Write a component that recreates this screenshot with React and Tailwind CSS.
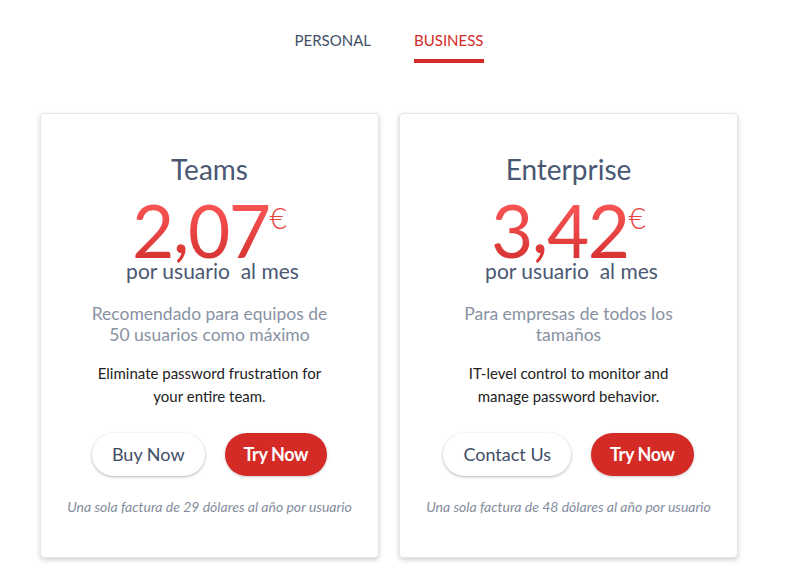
import React from "react";

const font = { fontFamily: "Lato, 'Open Sans', sans-serif" };

function Card({ title, whole, cents, desc, body, secondary, footer }) {
  return (
    <div className="w-[339px] h-[445px] bg-white rounded-[4px] border border-[#e6e6e6] shadow-[0_2px_5px_rgba(0,0,0,0.18)] flex flex-col items-center pt-[38px]">
      <div className="text-[28px] leading-[34px] text-[#4a5873]">{title}</div>
      <div className="flex items-start mt-[8px]">
        <span className="text-[73px] leading-[72px] tracking-[-1.5px] bg-gradient-to-b from-[#ff5a5a] to-[#d32f2f] bg-clip-text text-transparent">
          {whole}
          <span className="leading-[40px] align-[5px]">,</span>
          {cents}
        </span>
        <span className="text-[30px] leading-[30px] mt-[8px] font-light text-[#e8443f]">€</span>
      </div>
      <div className="text-[21px] leading-[20px] text-[#4a5873] whitespace-pre pl-[6px] -mt-[5px]">{"por usuario  al mes"}</div>
      <div className="mt-[22px] w-[255px] text-center text-[17.5px] leading-[21px] text-[#8892a3]">{desc}</div>
      <div className="mt-[17px] w-[250px] text-center text-[15px] leading-[23px] text-[#222]">{body}</div>
      <div className="mt-[25px] flex gap-[20px]">
        <button className="h-[43px] px-[20px] rounded-full bg-white text-[18px] text-[#3f4d66] shadow-[0_1px_3px_rgba(0,0,0,0.3)]">{secondary}</button>
        <button className="h-[43px] px-[19px] rounded-full bg-[#d42b27] text-[18px] font-bold tracking-[-0.4px] text-white shadow-[0_1px_3px_rgba(0,0,0,0.2)]">Try Now</button>
      </div>
      <div className="mt-[20px] text-[14px] italic text-[#838c9d]">{footer}</div>
    </div>
  );
}

export default function App() {
  return (
    <div style={font} className="w-[778px] h-[572px] bg-white flex flex-col items-center">
      <div className="flex gap-[43px] pt-[31px]">
        <div className="text-[15px] leading-[18px] text-[#3f5068] pb-[14px]">PERSONAL</div>
        <div className="text-[15px] leading-[18px] text-[#d42b27] pb-[10px] border-b-4 border-[#d42b27]">BUSINESS</div>
      </div>
      <div className="flex gap-[20px] mt-[50px]">
        <Card
          title="Teams"
          whole="2"
          cents="07"
          desc="Recomendado para equipos de 50 usuarios como máximo"
          body="Eliminate password frustration for your entire team."
          secondary="Buy Now"
          footer="Una sola factura de 29 dólares al año por usuario"
        />
        <Card
          title="Enterprise"
          whole="3"
          cents="42"
          desc="Para empresas de todos los tamaños"
          body="IT-level control to monitor and manage password behavior."
          secondary="Contact Us"
          footer="Una sola factura de 48 dólares al año por usuario"
        />
      </div>
    </div>
  );
}
